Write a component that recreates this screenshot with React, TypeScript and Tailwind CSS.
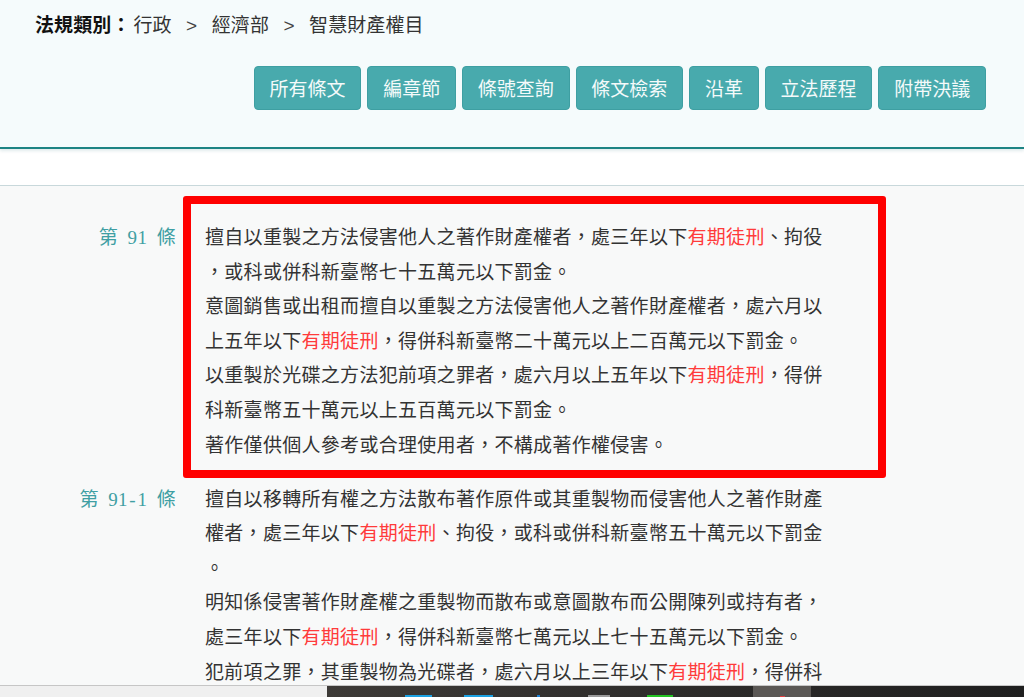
import React from "react";

type Seg = string | { r: string };
const R = { r: "有期徒刑" };

const art91: Seg[][] = [
  ["擅自以重製之方法侵害他人之著作財產權者，處三年以下", R, "、拘役"],
  ["，或科或併科新臺幣七十五萬元以下罰金。"],
  ["意圖銷售或出租而擅自以重製之方法侵害他人之著作財產權者，處六月以"],
  ["上五年以下", R, "，得併科新臺幣二十萬元以上二百萬元以下罰金。"],
  ["以重製於光碟之方法犯前項之罪者，處六月以上五年以下", R, "，得併"],
  ["科新臺幣五十萬元以上五百萬元以下罰金。"],
  ["著作僅供個人參考或合理使用者，不構成著作權侵害。"],
];

const art911: Seg[][] = [
  ["擅自以移轉所有權之方法散布著作原件或其重製物而侵害他人之著作財產"],
  ["權者，處三年以下", R, "、拘役，或科或併科新臺幣五十萬元以下罰金"],
  ["。"],
  ["明知係侵害著作財產權之重製物而散布或意圖散布而公開陳列或持有者，"],
  ["處三年以下", R, "，得併科新臺幣七萬元以上七十五萬元以下罰金。"],
  ["犯前項之罪，其重製物為光碟者，處六月以上三年以下", R, "，得併科"],
];

const buttons = ["所有條文", "編章節", "條號查詢", "條文檢索", "沿革", "立法歷程", "附帶決議"];

function Lines({ lines }: { lines: Seg[][] }) {
  return (
    <>
      {lines.map((line, i) => (
        <div key={i} className="whitespace-nowrap h-[34.6px] leading-[34.6px]">
          {line.map((s, j) =>
            typeof s === "string" ? (
              <span key={j}>{s}</span>
            ) : (
              <span key={j} className="text-[#ff3b3b]">
                {s.r}
              </span>
            )
          )}
        </div>
      ))}
    </>
  );
}

function Label({ num }: { num: string }) {
  return (
    <div className="w-[176px] shrink-0 text-right text-[19px] leading-[34.6px] text-[#3f9fa3] whitespace-nowrap">
      <span>第</span>
      <span className="mx-[9.5px] font-['Liberation_Serif',serif]">
        {num.split("").map((c, i) =>
          c === "-" ? (
            <span key={i} className="inline-block w-[9.5px] text-center">
              -
            </span>
          ) : (
            <span key={i}>{c}</span>
          )
        )}
      </span>
      <span>條</span>
    </div>
  );
}

export default function App() {
  return (
    <div className="w-[1024px] h-[697px] overflow-hidden flex flex-col bg-[#f8f9f9] text-[#333] font-['Noto_Sans_CJK_TC','Noto_Sans_CJK_SC',sans-serif]">
      <header className="relative z-10 h-[149px] shrink-0 bg-[#f5fbfc] border-b-2 border-[#1d8484] shadow-[0_2px_3px_rgba(0,90,100,0.12)] flex flex-col">
        <div className="pl-[35px] pt-[11px] text-[19px] leading-[26px] tracking-[0.1px] whitespace-nowrap text-[#333]">
          <span className="font-bold text-[#111]">法規類別：</span>
          <span className="ml-[3px]">行政</span>
          <span className="inline-block w-[40px] text-center font-['Liberation_Sans',sans-serif] text-[#444]">&gt;</span>
          <span>經濟部</span>
          <span className="inline-block w-[40px] text-center font-['Liberation_Sans',sans-serif] text-[#444]">&gt;</span>
          <span>智慧財產權目</span>
        </div>
        <div className="mt-[27px] flex justify-end gap-[6px] pr-[38px]">
          {buttons.map((b) => (
            <div
              key={b}
              className="h-[44px] px-[14.8px] flex items-center rounded-[4px] bg-[#48aaad] border border-[#3e9fa2] text-[19px] text-[#f4fafa] whitespace-nowrap"
            >
              {b}
            </div>
          ))}
        </div>
      </header>
      <div className="h-[37px] shrink-0 bg-white border-b border-[#c8d8db]" />
      <main className="flex-1 overflow-hidden pt-[33px] text-[19px] tracking-[0.3px]">
        <div className="flex">
          <Label num="91" />
          <div className="relative ml-[29px] w-[620px]">
            <Lines lines={art91} />
            <div className="absolute -left-[22px] -top-[23px] -right-[61px] -bottom-[17px] border-[8px] border-[#ff0000] rounded-[3px] pointer-events-none" />
          </div>
        </div>
        <div className="flex mt-[19.4px]">
          <Label num="91-1" />
          <div className="ml-[29px] w-[620px]">
            <Lines lines={art911} />
          </div>
        </div>
      </main>
      <footer className="h-[12px] shrink-0 flex border-t border-[#c6c6c6]">
        <div className="w-[327px] bg-[#f0f0f0]" />
        <div className="flex-1 flex bg-gradient-to-r from-[#3d3a37] to-[#1f1f1f]">
          <div className="ml-[78px] mt-[9px] h-[2px] w-[27px] bg-[#1ba1e2]" />
          <div className="ml-[32px] mt-[9px] h-[2px] w-[29px] bg-[#1ba1e2]" />
          <div className="ml-[44px] mt-[9px] h-[2px] w-[3px] bg-[#1e7fd0]" />
          <div className="ml-[48px] mt-[9px] h-[2px] w-[22px] bg-[#9a9a9a]" />
          <div className="ml-[37px] mt-[9px] h-[2px] w-[26px] bg-[#22c322]" />
          <div className="ml-[80px] h-full w-[58px] bg-[#5b5855] flex justify-center">
            <div className="mt-[10px] h-[1px] w-[5px] bg-[#e04040]" />
          </div>
        </div>
      </footer>
    </div>
  );
}
